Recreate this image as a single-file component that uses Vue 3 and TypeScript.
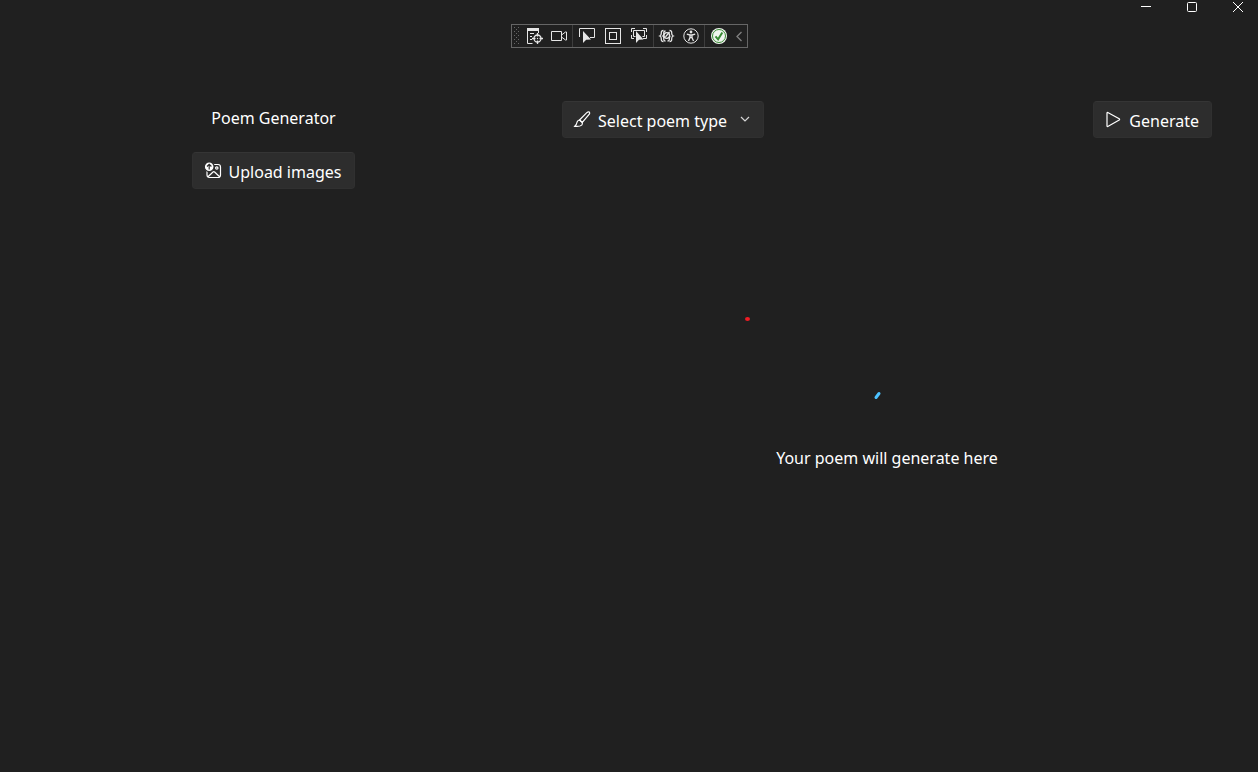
<script setup lang="ts">
import { ref } from 'vue'

const poemTypes: string[] = ['Select poem type']
const poemType = ref<string>(poemTypes[0])
const placeholder = ref<string>('Your poem will generate here')
</script>

<template>
  <div class="window">
    <header class="titlebar">
      <button type="button" aria-label="Minimize">
        <svg width="12" height="12" viewBox="0 0 12 12"><path d="M1 5.5h10" /></svg>
      </button>
      <button type="button" aria-label="Maximize">
        <svg width="12" height="12" viewBox="0 0 12 12"><rect x="1.5" y="1.5" width="9" height="9" rx="1" /></svg>
      </button>
      <button type="button" aria-label="Close">
        <svg width="12" height="12" viewBox="0 0 12 12"><path d="M1 1l10 10M11 1L1 11" /></svg>
      </button>
    </header>

    <div class="debugbar" role="toolbar" aria-label="Debug tools">
      <svg class="grip" width="6" height="18" viewBox="0 0 6 18">
        <path d="M0.5 0v18M4.5 0v18" stroke-dasharray="1 3" />
        <path d="M2.5 2v16" stroke-dasharray="1 3" />
      </svg>
      <button type="button" class="wide" aria-label="Live visual tree">
        <svg width="18" height="18" viewBox="0 0 18 18">
          <path d="M2 1h12v3H2z" class="solid" />
          <path d="M2.500 4v12.500h5M13.500 4v2M5 6.500h4M5 9.500h2M5 12.500h2" />
          <circle cx="12.500" cy="11.500" r="3.500" class="bold" />
          <path d="M12.500 6v3.500M12.500 13.500V17M7 11.500h3.500M14.500 11.500H18" class="bold" />
          <circle cx="12.500" cy="11.500" r="0.700" class="solid" />
        </svg>
      </button>
      <button type="button" aria-label="Record">
        <svg width="18" height="18" viewBox="0 0 18 18">
          <path d="M1.500 4.500h10v9h-10zM11.500 8l4-3h1v8h-1l-4-3" />
        </svg>
      </button>
      <span class="divider"></span>
      <button type="button" class="wide" aria-label="Select element">
        <svg width="18" height="18" viewBox="0 0 18 18">
          <path d="M1.500 10V1.500h15v9H12" />
          <path d="M5 4v12l3.200-3.200L13 12.500z" class="solid" />
        </svg>
      </button>
      <button type="button" class="wide" aria-label="Layout adorners">
        <svg width="18" height="18" viewBox="0 0 18 18">
          <rect x="1.500" y="1.500" width="15" height="15" />
          <rect x="5.500" y="5.500" width="7" height="7" />
        </svg>
      </button>
      <button type="button" class="wide" aria-label="Track focused element">
        <svg width="18" height="18" viewBox="0 0 18 18">
          <path d="M1.500 5V1.500H5M13 1.500h3.500V5M1.500 8v3.500H4M16.500 8v3.500H13M5.500 9.500h-2v-6h11v6h-2" />
          <path d="M6 4v12l3-3.200 4.500-.3z" class="solid" />
        </svg>
      </button>
      <span class="divider"></span>
      <button type="button" aria-label="Binding failures">
        <svg width="18" height="18" viewBox="0 0 18 18" class="bold">
          <path d="M5.500 3.500Q3 3.500 3.300 6.300q.1 2-1.500 2.700 1.600.7 1.500 2.700Q3 14.500 5.500 14.500M11.500 3.500q2.500 0 2.200 2.800-.1 2 1.500 2.700-1.600.7-1.500 2.700.3 2.800-2.200 2.800" />
          <path d="M7.500 4Q5.500 4 5.800 6.500 5.900 8.500 4.800 9q1.100.5 1 2.500-.3 2.500 1.700 2.500M9.500 14q2 0 1.900-2.500 0-2 .9-2.500" />
          <circle cx="8.800" cy="8.500" r="2.800" /><path d="M7.500 9.800L11.500 5" />
        </svg>
      </button>
      <button type="button" aria-label="Accessibility checker">
        <svg width="18" height="18" viewBox="0 0 18 18">
          <circle cx="9" cy="9" r="7.200" />
          <circle cx="9" cy="5" r="1.400" class="solid" />
          <path d="M4.800 7.200L8 8h2l3.200-.8M8 8v2.500L6.500 14M10 8v2.500l1.500 3.500M8 10.500h2" class="bold" />
        </svg>
      </button>
      <span class="divider"></span>
      <button type="button" class="wide" aria-label="Hot reload available">
        <svg width="18" height="18" viewBox="0 0 18 18">
          <circle cx="9" cy="9" r="8" class="status" />
          <circle cx="9" cy="9" r="6.500" class="status-ring" />
          <path d="M5.500 9.300l2.600 3L12.300 5.500" class="status-check" />
        </svg>
      </button>
      <button type="button" class="collapse" aria-label="Collapse toolbar">
        <svg width="8" height="12" viewBox="0 0 8 12"><path d="M6.500 2L2 6.500 6.500 11" /></svg>
      </button>
    </div>

    <main class="content">
      <section class="images">
        <h1>Poem Generator</h1>
        <button type="button" class="control">
          <svg width="18" height="18" viewBox="0 0 18 18">
            <path d="M9 2.500h5q2.500 0 2.500 2.500v8q0 2.500-2.500 2.500H5.500Q3 15.500 3 13v-4M4 14.800l5-4.800q.8-.7 1.600 0l5 4.800" />
            <circle cx="12.800" cy="6" r="1.200" />
            <circle cx="5.200" cy="4.700" r="4.900" class="badge" />
            <path d="M5.200 7.500V2.300M3 4.500l2.200-2.200 2.200 2.200" class="badge-arrow" />
          </svg>
          <span>Upload images</span>
        </button>
      </section>

      <section class="poem">
        <div class="actions">
          <label class="control picker">
            <svg width="18" height="18" viewBox="0 0 18 18">
              <path d="M6.500 9L13.800 1.600q1.300-1.100 2.500-.6.800 1.100-.2 2.500L9.300 11.500z" />
              <path d="M6.500 9q-1.800.3-2.400 2-.4 2.500-2.300 4.300 4.800.6 6.900-1.200 1-1.100.6-2.600L6.500 9" />
            </svg>
            <select v-model="poemType" aria-label="Poem type">
              <option v-for="type in poemTypes" :key="type" :value="type">{{ type }}</option>
            </select>
            <svg class="chevron" width="10" height="12" viewBox="0 0 10 12"><path d="M1 3l4 4 4-4" /></svg>
          </label>
          <button type="button" class="control">
            <svg width="18" height="18" viewBox="0 0 18 18">
              <path d="M3 2q0-.8.800-.5l11.400 6.300q.8.600 0 1.200L3.800 15.500q-.8.300-.8-.5z" />
            </svg>
            <span>Generate</span>
          </button>
        </div>
        <div class="result">
          <svg class="ring" width="32" height="32" viewBox="0 0 32 32" role="img" aria-label="Loading">
            <path d="M5 10.500L8 6.500" />
          </svg>
          <p>{{ placeholder }}</p>
        </div>
      </section>
    </main>
    <span class="pointer"></span>
  </div>
</template>

<style>
body {
  background: #202020;
}
</style>

<style scoped>
.window {
  position: relative;
  display: flex;
  flex-direction: column;
  min-height: 100vh;
  box-sizing: border-box;
  background: #202020;
  color: #fff;
  font-family: "Noto Sans", "Open Sans", sans-serif;
  font-size: 16px;
  line-height: 24px;
}

button,
select {
  margin: 0;
  padding: 0;
  border: 0;
  background: none;
  color: inherit;
  font: inherit;
}

svg {
  display: block;
  flex: none;
  fill: none;
  stroke: currentColor;
  stroke-width: 1;
}

.titlebar {
  display: flex;
  justify-content: flex-end;
  gap: 6px;
  height: 14px;
}

.titlebar button {
  display: grid;
  place-items: center;
  width: 40px;
}

.debugbar {
  display: flex;
  align-items: center;
  align-self: center;
  height: 22px;
  margin-top: 10px;
  border: 1px solid #666;
  color: #e6e6e6;
}

.debugbar button {
  display: grid;
  place-items: center;
  width: 24px;
  height: 22px;
}

.debugbar .wide {
  width: 26px;
}

.debugbar .collapse {
  width: 15px;
  color: #808080;
}

.debugbar .divider {
  width: 1px;
  height: 22px;
  margin: 0 1px;
  background: #3d3d3d;
}

.grip {
  margin: 0 1px 0 2px;
  color: #666;
}

.bold {
  stroke-width: 1.3;
}

.solid {
  fill: currentColor;
  stroke: none;
}

.status {
  fill: #f0f5ef;
  stroke: none;
}

.status-ring {
  stroke: #388a34;
}

.status-check {
  stroke: #388a34;
  stroke-width: 2;
}

.collapse svg {
  stroke-width: 1.3;
}

.content {
  display: grid;
  grid-template-columns: 7fr 10fr;
  column-gap: 61px;
  flex: 1;
  padding: 53px 46px 0;
}

.images {
  display: flex;
  flex-direction: column;
  align-items: center;
}

h1 {
  margin: 5px 0 22px;
  font-size: 16px;
  font-weight: 400;
  line-height: 24px;
}

.control {
  display: flex;
  align-items: center;
  gap: 7px;
  box-sizing: border-box;
  height: 37px;
  padding: 0 12px 0 10px;
  border: 1px solid #303030;
  border-top-color: #353535;
  border-radius: 4px;
  background: #2d2d2d;
}

.images .control {
  padding: 0 13px 0 11px;
}

.control svg {
  stroke-width: 1.2;
}

.control span,
.control select {
  padding-top: 3px;
}

.picker select {
  appearance: none;
  outline: none;
}

.control .chevron {
  margin: 0 1px 0 5px;
  color: #d5d5d5;
  stroke-width: 1.2;
}

.badge {
  fill: #fff;
  stroke: #2d2d2d;
}

.badge-arrow {
  stroke: #2d2d2d;
}

.actions {
  display: flex;
  justify-content: space-between;
}

.result {
  display: flex;
  flex-direction: column;
  align-items: center;
  gap: 27px;
  padding-top: 249px;
}

.result p {
  margin: 0;
}

.ring {
  color: #4cc2ff;
}

.ring path {
  stroke-width: 3;
  stroke-linecap: round;
}

.pointer {
  position: absolute;
  top: 317px;
  left: calc(50% + 116px);
  width: 5px;
  height: 4px;
  border-radius: 50%;
  background: #f01c24;
}
</style>
